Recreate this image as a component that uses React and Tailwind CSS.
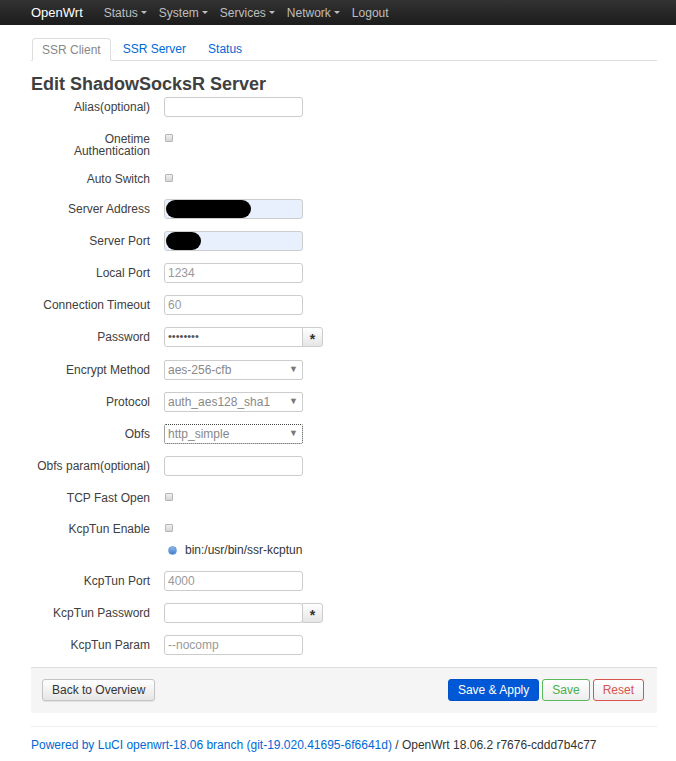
import React from 'react';

// --- small building blocks ---
const Caret = () => (
    <span className="ml-[3px] inline-block w-0 h-0 border-l-[3px] border-r-[3px] border-t-[3px] border-l-transparent border-r-transparent border-t-[#bfbfbf] align-middle"></span>
);

const Checkbox = () => (
    <span className="block w-[8px] h-[8px] ml-[1px] mt-[5px] rounded-[1px] border border-[#b5b5b5] bg-gradient-to-b from-[#f0f0f0] to-[#d6d6d6]"></span>
);

const TextBox = ({ placeholder, autofill, blob, password }) => (
    <div className={`relative w-[139px] h-[20px] border border-[#ccc] rounded-[3px] ${autofill ? 'bg-[#e8f0fe]' : 'bg-white'} ${password ? 'rounded-r-none' : ''}`}>
        {placeholder && <span className="absolute left-[3px] top-[2px] leading-[14px] text-[#999]">{placeholder}</span>}
        {password && <span className="absolute left-[3px] top-[1px] leading-[14px] text-[11px] text-[#555]">••••••••</span>}
        {blob && <span className="absolute left-[1px] top-[0px] h-[18px] rounded-full bg-black" style={{ width: blob }}></span>}
    </div>
);

const StarButton = () => (
    <div className="w-[21px] h-[20px] -ml-px border border-[#ccc] rounded-r-[3px] bg-gradient-to-b from-[#fff] to-[#e6e6e6] flex items-center justify-center text-[14px] font-bold text-[#333] leading-none pt-[3px]">*</div>
);

const Select = ({ value, focused }) => (
    <div className={`w-[139px] h-[20px] rounded-[2px] flex items-center justify-between pl-[3px] pr-[4px] ${focused ? 'border border-dotted border-[#444]' : 'border border-[#ccc]'}`}>
        <span className="text-[#888] leading-[14px]">{value}</span>
        <span className="text-[9px] text-[#777]">▼</span>
    </div>
);

const Row = ({ label, children, twoLine, extra }) => (
    <div className={`flex items-start ${extra ? 'mb-[13px]' : 'mb-[12px]'}`}>
        <div className={`w-[119px] text-right pt-[4px] leading-[12px] ${twoLine ? '' : 'whitespace-nowrap'}`}>{label}</div>
        <div className="ml-[14px] flex items-start">{children}</div>
    </div>
);

function App() {
    const menu = ['Status', 'System', 'Services', 'Network'];

    return (
        <div className="min-h-screen bg-white text-[12px] text-[#404040]" style={{ fontFamily: '"Liberation Sans", Arial, sans-serif' }}>
            {/* --- top bar --- */}
            <nav className="h-[25px] bg-gradient-to-b from-[#333] to-[#1c1c1c] flex items-center pl-[31px]">
                <span className="text-[13px] text-white">OpenWrt</span>
                <div className="flex items-center ml-[21px] gap-[12px] text-[#bfbfbf]">
                    {menu.map(m => (
                        <span key={m} className="flex items-center">{m}<Caret /></span>
                    ))}
                    <span>Logout</span>
                </div>
            </nav>

            <div className="pl-[31px] pr-[19px]">
                {/* --- tabs --- */}
                <div className="mt-[13px] flex border-b border-[#ddd] h-[23px]">
                    <div className="h-[23px] px-[9px] border border-[#ddd] border-b-white rounded-t-[4px] bg-white text-[#888] leading-[22px] ml-px">SSR Client</div>
                    <div className="h-[22px] px-[10px] ml-[2px] text-[#0069d6] leading-[22px]">SSR Server</div>
                    <div className="h-[22px] px-[10px] ml-[2px] text-[#0069d6] leading-[22px]">Status</div>
                </div>

                <h2 className="mt-[13px] text-[18px] leading-[20px] font-bold text-[#404040]">Edit ShadowSocksR Server</h2>

                {/* --- form --- */}
                <div className="mt-[3px]">
                    <Row label="Alias(optional)"><TextBox /></Row>
                    <Row label={<>Onetime<br />Authentication</>} twoLine><Checkbox /></Row>
                    <Row label="Auto Switch"><div className="h-[18px]"><Checkbox /></div></Row>
                    <Row label="Server Address"><TextBox autofill blob={85} /></Row>
                    <Row label="Server Port"><TextBox autofill blob={35} /></Row>
                    <Row label="Local Port"><TextBox placeholder="1234" /></Row>
                    <Row label="Connection Timeout"><TextBox placeholder="60" /></Row>
                    <Row label="Password" extra><TextBox password /><StarButton /></Row>
                    <Row label="Encrypt Method"><Select value="aes-256-cfb" /></Row>
                    <Row label="Protocol"><Select value="auth_aes128_sha1" /></Row>
                    <Row label="Obfs"><Select value="http_simple" focused /></Row>
                    <Row label="Obfs param(optional)"><TextBox /></Row>
                    <Row label="TCP Fast Open" extra><div className="h-[18px]"><Checkbox /></div></Row>
                    <Row label="KcpTun Enable">
                        <div className="flex flex-col">
                            <div className="h-[18px]"><Checkbox /></div>
                            <div className="mt-[4px] h-[18px] flex items-center">
                                <span className="ml-[4px] w-[9px] h-[9px] rounded-full bg-gradient-to-b from-[#8fb8e8] to-[#3d7fcf] border border-[#6a9bd6]"></span>
                                <span className="ml-[8px] text-[#333]">bin:/usr/bin/ssr-kcptun</span>
                            </div>
                        </div>
                    </Row>
                    <Row label="KcpTun Port"><TextBox placeholder="4000" /></Row>
                    <Row label="KcpTun Password"><TextBox /><StarButton /></Row>
                    <Row label="KcpTun Param"><TextBox placeholder="--nocomp" /></Row>
                </div>

                {/* --- actions --- */}
                <div className="mt-[12px] border-t border-[#ddd] bg-[#f5f5f5] h-[46px] flex items-start justify-between pt-[11px] pl-[11px] pr-[13px]">
                    <button className="h-[22px] px-[9px] rounded-[3px] border border-[#c4c4c4] bg-gradient-to-b from-[#fff] to-[#e6e6e6] text-[#333] shadow-[0_1px_1px_rgba(0,0,0,0.08)]">Back to Overview</button>
                    <div className="flex gap-[3px]">
                        <button className="h-[22px] px-[9px] rounded-[3px] border border-[#0050c8] bg-[#0058d6] text-white">Save &amp; Apply</button>
                        <button className="h-[22px] px-[9px] rounded-[3px] border border-[#5cb85c] bg-gradient-to-b from-[#fff] to-[#eee] text-[#4cae4c]">Save</button>
                        <button className="h-[22px] px-[9px] rounded-[3px] border border-[#d9534f] bg-gradient-to-b from-[#fff] to-[#eee] text-[#d9534f]">Reset</button>
                    </div>
                </div>

                {/* --- footer --- */}
                <div className="mt-[13px] border-t border-[#eee] pt-[11px] leading-[14px]">
                    <span className="text-[#0069d6]">Powered by LuCI openwrt-18.06 branch (git-19.020.41695-6f6641d)</span>
                    <span className="text-[#333]"> / OpenWrt 18.06.2 r7676-cddd7b4c77</span>
                </div>
            </div>
        </div>
    );
}

export default App;
